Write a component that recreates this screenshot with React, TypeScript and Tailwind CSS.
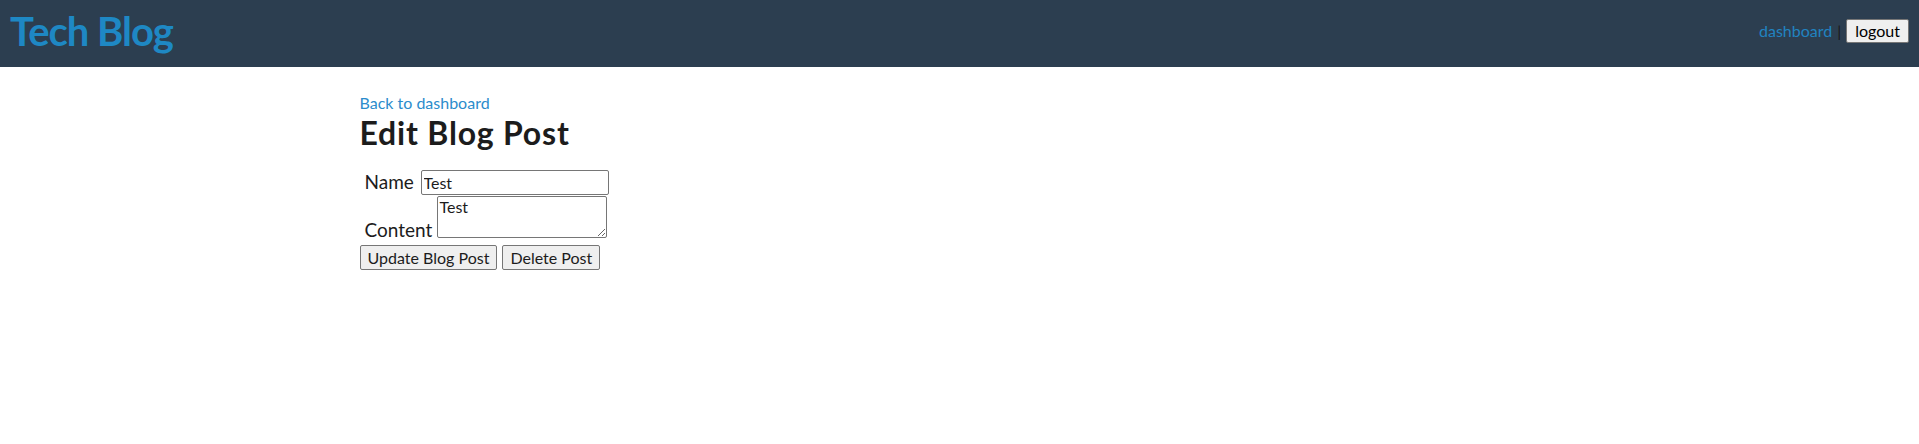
import React from 'react';

const App = () => {
  return (
    <div className="min-h-[444px] bg-white text-[#1c1c1c] font-['Lato','Liberation_Sans',sans-serif]">
      {/* Header */}
      <header className="h-[67px] bg-[#2c3e50] flex justify-between items-start px-[10px]">
        <h1 className="mt-[11px] text-[40px] leading-[40px] font-bold tracking-[-1px] text-[#1e88c4]">Tech Blog</h1>
        <nav className="mt-[19px] flex items-center h-[24px] text-[16px]">
          <a href="#" className="text-[#2183c0]">dashboard</a>
          <span className="mx-[5px] text-[#1a1a1a]">|</span>
          <button className="h-[24px] px-[8px] bg-[#efefef] border border-[#767676] rounded-[2px] text-black leading-[20px]">
            logout
          </button>
        </nav>
      </header>

      {/* Edit form */}
      <main className="max-w-[1200px] mx-auto pt-[25px]">
        <a href="#" className="block text-[16px] leading-[21px] text-[#2b8ccc]">Back to dashboard</a>
        <h2 className="text-[32px] leading-[39px] font-bold tracking-[0.8px]">Edit Blog Post</h2>
        <form className="mt-[17px] text-[19px]">
          <div className="flex items-baseline">
            <label className="w-[61px] pl-[5px] leading-[26px]">Name</label>
            <input
              type="text"
              defaultValue="Test"
              className="w-[188px] h-[25px] px-[2px] text-[16px] leading-[21px] border border-[#767676] rounded-[2px]"
            />
          </div>
          <div className="flex items-end mt-[1px]">
            <label className="w-[77px] pl-[5px] leading-[19px]">Content</label>
            <textarea
              defaultValue="Test"
              className="w-[170px] h-[42px] mb-[1px] px-[2px] text-[16px] leading-[19px] border border-[#767676] rounded-[2px]"
            />
          </div>
          <div className="flex gap-[5px] mt-[6px]">
            <button type="button" className="h-[25px] px-[7px] text-[16px] leading-[21px] bg-[#efefef] border border-[#767676] rounded-[2px]">
              Update Blog Post
            </button>
            <button type="button" className="h-[25px] px-[7px] text-[16px] leading-[21px] bg-[#efefef] border border-[#767676] rounded-[2px]">
              Delete Post
            </button>
          </div>
        </form>
      </main>
    </div>
  );
};

export default App;
